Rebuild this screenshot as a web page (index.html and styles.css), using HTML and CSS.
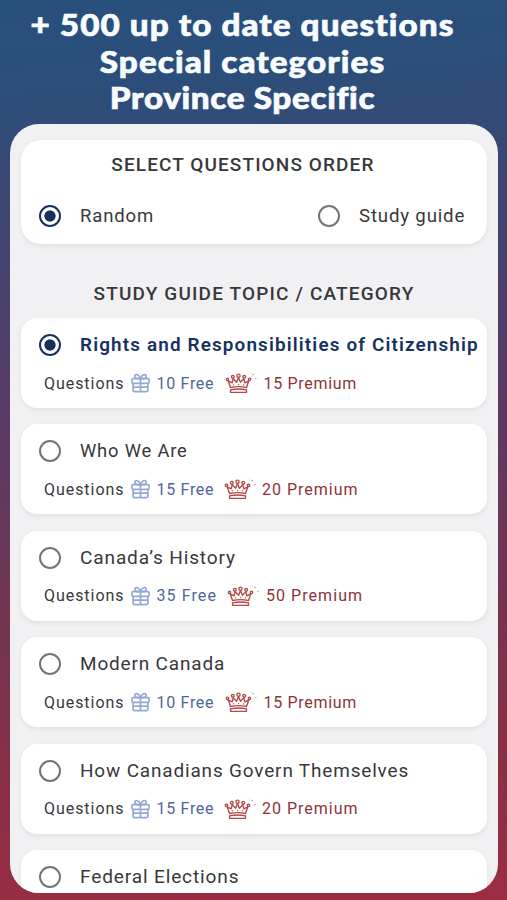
FILE: index.html
```html
<!DOCTYPE html>
<html lang="en">
<head>
<meta charset="utf-8">
<title>Questions</title>
<link rel="stylesheet" href="styles.css">
</head>
<body>
<svg class="defs" width="0" height="0">
  <symbol id="gift" viewBox="0 0 20 20">
    <g fill="none" stroke="currentColor" stroke-width="1.8" stroke-linejoin="round">
      <rect x="1" y="5.5" width="18" height="4.8" rx="1"/>
      <path d="M2.2 10.3v7.4q0 1.3 1.3 1.3h13q1.3 0 1.3-1.3v-7.4M10 5.5V19M2.2 14.300h15.600M10 5.500C9 .8 4.500-.2 4 2.800 3.800 5 6 5.500 10 5.500ZM10 5.500C11 .8 15.500-.2 16 2.800 16.200 5 14 5.500 10 5.500Z"/>
    </g>
  </symbol>
  <symbol id="crown" viewBox="0 0 32 22">
    <g fill="none" stroke="currentColor" stroke-width="1.35" stroke-linejoin="round" stroke-linecap="round">
      <path d="M5.500 15.500 3.200 8.800l4 2L8.200 6.700l3.400 3.500 1.900-4.700 1.900 4.700 3.400-3.500 1 4.100 4-2-2.300 6.700Q13.500 13.800 5.500 15.500Z"/>
      <path d="M5.500 17.800Q13.500 16.200 21.500 17.800M5.500 20.300h16V17.800M5.500 20.300V17.800"/>
      <circle cx="2.500" cy="7.300" r="1.200"/><circle cx="7.800" cy="4.800" r="1.400"/><circle cx="13.500" cy="3.700" r="1.600"/><circle cx="19.200" cy="4.800" r="1.400"/><circle cx="24.500" cy="7.300" r="1.200"/>
      <path d="M8.500 12.800h.1M13.500 12.300h.1M18.500 12.800h.1"/>
    </g>
    <path d="M27 2.500h2M28 1.500v2M30 6.500h1.400M30.700 5.800v1.400M25 .8h.8" stroke="currentColor" stroke-width=".7" opacity=".55"/>
  </symbol>
</svg>
<header class="headline">
  <div class="h1">+ 500 up to date questions</div>
  <div class="h2">Special categories</div>
  <div class="h3">Province Specific</div>
</header>
<main class="panel">
  <section class="card order">
    <h2 class="title t-order">SELECT QUESTIONS ORDER</h2>
    <div class="choices">
      <div class="choice"><span class="radio on"></span><span class="label l-random">Random</span></div>
      <div class="choice guide"><span class="radio"></span><span class="label l-guide">Study guide</span></div>
    </div>
  </section>
  <h2 class="title t-topic">STUDY GUIDE TOPIC / CATEGORY</h2>
  <div class="list">
    <section class="card topic">
      <div class="choice"><span class="radio on"></span><span class="label selected">Rights and Responsibilities of Citizenship</span></div>
      <div class="meta"><span class="q">Questions</span><svg class="gift"><use href="#gift"/></svg><span class="free">10 Free</span><svg class="crown"><use href="#crown"/></svg><span class="prem">15 Premium</span></div>
    </section>
    <section class="card topic">
      <div class="choice"><span class="radio"></span><span class="label l-who">Who We Are</span></div>
      <div class="meta m20"><span class="q">Questions</span><svg class="gift"><use href="#gift"/></svg><span class="free">15 Free</span><svg class="crown"><use href="#crown"/></svg><span class="prem">20 Premium</span></div>
    </section>
    <section class="card topic">
      <div class="choice"><span class="radio"></span><span class="label l-history">Canada’s History</span></div>
      <div class="meta m50"><span class="q">Questions</span><svg class="gift"><use href="#gift"/></svg><span class="free">35 Free</span><svg class="crown"><use href="#crown"/></svg><span class="prem">50 Premium</span></div>
    </section>
    <section class="card topic">
      <div class="choice"><span class="radio"></span><span class="label">Modern Canada</span></div>
      <div class="meta"><span class="q">Questions</span><svg class="gift"><use href="#gift"/></svg><span class="free">10 Free</span><svg class="crown"><use href="#crown"/></svg><span class="prem">15 Premium</span></div>
    </section>
    <section class="card topic">
      <div class="choice"><span class="radio"></span><span class="label">How Canadians Govern Themselves</span></div>
      <div class="meta m20"><span class="q">Questions</span><svg class="gift"><use href="#gift"/></svg><span class="free">15 Free</span><svg class="crown"><use href="#crown"/></svg><span class="prem">20 Premium</span></div>
    </section>
    <section class="card topic">
      <div class="choice"><span class="radio"></span><span class="label l-federal">Federal Elections</span></div>
    </section>
  </div>
</main>
</body>
</html>
```
FILE: styles.css
```css
* { box-sizing: border-box; }
body {
  margin: 0;
  height: 900px;
  overflow: hidden;
  font-family: Roboto, "Liberation Sans", sans-serif;
  color: #38383c;
  background: linear-gradient(176deg, #28507d 0%, #2c4e7a 10%, #404471 25%, #593a65 45%, #74344f 67%, #8d2f46 87%, #9b2d41 100%);
}
.defs { display: block; }
.headline {
  height: 124px;
  padding: 6px 22px 0 0;
  text-align: center;
  font: 900 31px/36.5px Lato, sans-serif;
  color: #f8fcff;
  -webkit-text-stroke: .7px #f8fcff;
  white-space: nowrap;
}
.headline div { transform: scaleX(1.072); }
.h1 { letter-spacing: 1px; }
.h2 { letter-spacing: 1px; }
.h3 { letter-spacing: .6px; }
.panel {
  width: 488px;
  height: 769px;
  margin-left: 10px;
  padding: 16px 11px 0;
  border-radius: 29px;
  overflow: hidden;
  background: #f1f1f3;
}
.card {
  border-radius: 16px;
  background: #fff;
  box-shadow: 0 2px 5px rgba(40, 40, 60, .08);
}
.order { height: 104px; border-radius: 20px; padding-top: 13px; }
.title { margin: 0; font-size: 18px; line-height: 24px; font-weight: 500; text-align: center; white-space: nowrap; transform: scaleX(1.055); }
.t-order { letter-spacing: 1.05px; padding-right: 21px; }
.t-topic { letter-spacing: 1.1px; margin: 38px 0 12px; }
.choices { display: flex; justify-content: space-between; padding: 27px 22px 0 0; }
.choice { display: flex; align-items: center; height: 24px; padding-left: 18px; }
.radio { width: 22px; height: 22px; flex: none; border: 2px solid #747477; border-radius: 50%; }
.radio.on { border-color: #17315f; background: radial-gradient(circle, #17315f 5.2px, #fff 6px); }
.label { margin-left: 19px; font-size: 18px; line-height: 24px; white-space: nowrap; letter-spacing: .8px; transform: scaleX(1.053); transform-origin: left; }
.l-random { transform: scaleX(1.03); }
.l-who { transform: scaleX(1.02); }
.l-history, .l-federal { transform: scaleX(1.06); }
.l-guide { transform: scaleX(1.035); }
.guide { margin-right: 3px; }
.selected { font-weight: 600; color: #17315f; transform: scaleX(1.05); letter-spacing: 1.08px; }
.list { display: flex; flex-direction: column; gap: 16.4px; }
.topic { height: 90px; flex: none; padding-top: 15px; }
.meta { display: flex; align-items: center; height: 22px; margin-top: 15px; padding-left: 23px; font-size: 16px; letter-spacing: .7px; white-space: nowrap; }
.q { width: 87px; letter-spacing: .95px; }
.gift { width: 19px; height: 20px; color: #94a9d1; }
.free { margin-left: 6.5px; width: 68px; color: #4f6699; }
.crown { width: 32px; height: 22px; color: #b24a49; }
.prem { margin-left: 7px; color: #8d3338; }
.m20 .free { width: 67px; }
.m20 .prem { margin-left: 6.5px; letter-spacing: 1px; }
.m50 .free { width: 70.5px; letter-spacing: 1.1px; }
.m50 .prem { letter-spacing: 1.05px; }
```
